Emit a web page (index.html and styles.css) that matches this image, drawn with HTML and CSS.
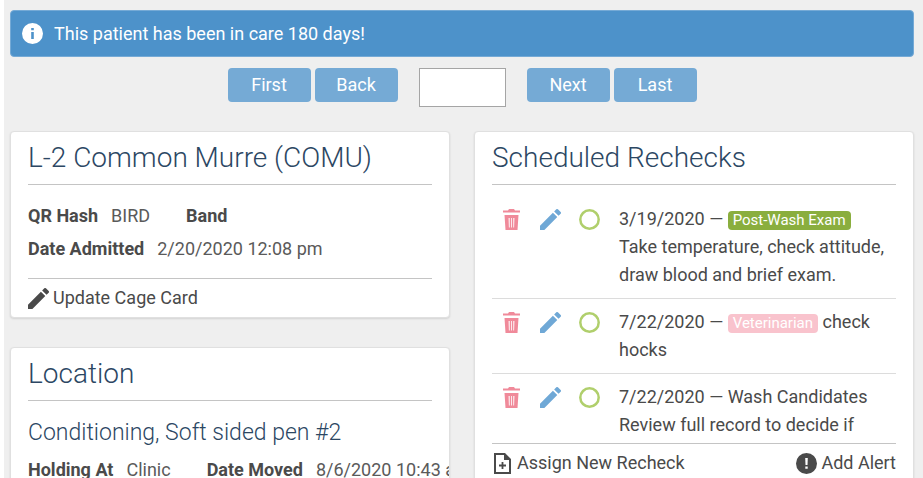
FILE: index.html
```
<!DOCTYPE html>
<html lang="en">

<head>
    <meta charset="UTF-8">
    <title>L-2 Common Murre (COMU)</title>
    <meta name="viewport" content="width=device-width, initial-scale=1.0">
    <link rel="stylesheet" href="styles.css">
</head>

<body>
    <svg class="sprite" aria-hidden="true">
        <symbol id="pencil" viewBox="3 3 18 18">
            <path d="M3 17.25V21h3.75L17.81 9.94l-3.75-3.75L3 17.25zM20.71 7.04a1 1 0 0 0 0-1.41l-2.34-2.34a1 1 0 0 0-1.41 0l-1.83 1.83 3.75 3.75 1.83-1.83z"/>
        </symbol>
        <symbol id="trash" viewBox="0 0 21 21">
            <path d="M2 1.500h5l1-1.500h5l1 1.500h5v2H2zM3.500 6h14l-1 15h-12zM7.600 9l.3 9.500h.8V9zM10.100 9v9.500h.8V9zM12.300 9v9.500h.8l.3-9.500z" fill-rule="evenodd"/>
        </symbol>
        <symbol id="circle" viewBox="0 0 21 21">
            <circle cx="10.500" cy="10.500" r="9.200" fill="none" stroke="currentColor" stroke-width="2.500"/>
        </symbol>
    </svg>
    <div class="page">
        <div class="notice" role="status">
            <svg class="icon" viewBox="0 0 21 21"><path fill-rule="evenodd" d="M10.500 0a10.500 10.500 0 1 0 0 21 10.500 10.500 0 0 0 0-21zM9.200 5h2.600v2.200H9.200zM9.200 9h2.600v7H9.200z"/></svg>
            <span>This patient has been in care 180 days!</span>
        </div>

        <form class="pager">
            <div class="pager-group">
                <button type="button" class="btn">First</button>
                <button type="button" class="btn">Back</button>
            </div>
            <input type="text" class="pager-input" aria-label="Case number">
            <div class="pager-group">
                <button type="button" class="btn">Next</button>
                <button type="button" class="btn">Last</button>
            </div>
        </form>

        <div class="columns">
            <div class="column">
                <section class="card">
                    <h2 class="card-title">L-2 Common Murre (COMU)</h2>
                    <dl class="facts">
                        <div class="facts-row">
                            <div class="fact"><dt>QR Hash</dt><dd>BIRD</dd></div>
                            <div class="fact"><dt>Band</dt><dd></dd></div>
                        </div>
                        <div class="facts-row">
                            <div class="fact"><dt>Date Admitted</dt><dd>2/20/2020 12:08 pm</dd></div>
                        </div>
                    </dl>
                    <div class="card-footer">
                        <a href="#" class="action"><svg class="icon"><use href="#pencil"/></svg>Update Cage Card</a>
                    </div>
                </section>

                <section class="card">
                    <h2 class="card-title">Location</h2>
                    <h3 class="card-subtitle">Conditioning, Soft sided pen #2</h3>
                    <dl class="facts facts-tight">
                        <div class="facts-row">
                            <div class="fact"><dt>Holding At</dt><dd>Clinic</dd></div>
                            <div class="fact"><dt>Date Moved</dt><dd>8/6/2020 10:43 am</dd></div>
                        </div>
                    </dl>
                </section>
            </div>

            <div class="column">
                <section class="card">
                    <h2 class="card-title">Scheduled Rechecks</h2>
                    <ul class="rechecks">
                        <li class="recheck">
                            <div class="recheck-tools">
                                <button type="button" class="tool trash" aria-label="Delete"><svg class="icon"><use href="#trash"/></svg></button>
                                <button type="button" class="tool edit" aria-label="Edit"><svg class="icon"><use href="#pencil"/></svg></button>
                                <button type="button" class="tool done" aria-label="Mark complete"><svg class="icon"><use href="#circle"/></svg></button>
                            </div>
                            <p>3/19/2020 — <span class="label green">Post-Wash Exam</span><br>Take temperature, check attitude, draw blood and brief exam.</p>
                        </li>
                        <li class="recheck">
                            <div class="recheck-tools">
                                <button type="button" class="tool trash" aria-label="Delete"><svg class="icon"><use href="#trash"/></svg></button>
                                <button type="button" class="tool edit" aria-label="Edit"><svg class="icon"><use href="#pencil"/></svg></button>
                                <button type="button" class="tool done" aria-label="Mark complete"><svg class="icon"><use href="#circle"/></svg></button>
                            </div>
                            <p>7/22/2020 — <span class="label pink">Veterinarian</span> check hocks</p>
                        </li>
                        <li class="recheck">
                            <div class="recheck-tools">
                                <button type="button" class="tool trash" aria-label="Delete"><svg class="icon"><use href="#trash"/></svg></button>
                                <button type="button" class="tool edit" aria-label="Edit"><svg class="icon"><use href="#pencil"/></svg></button>
                                <button type="button" class="tool done" aria-label="Mark complete"><svg class="icon"><use href="#circle"/></svg></button>
                            </div>
                            <p>7/22/2020 — Wash Candidates Review full record to decide if</p>
                        </li>
                    </ul>
                    <div class="card-footer">
                        <a href="#" class="action"><svg class="icon" viewBox="0 0 21 21"><path fill-rule="evenodd" d="M2 0h11l6 6v15H2zM4 2v17h13V7h-5V2z"/><path d="M9.600 9h1.800v2.600H14v1.800h-2.600V16H9.600v-2.600H7v-1.800h2.600z"/></svg>Assign New Recheck</a>
                        <a href="#" class="action"><svg class="icon" viewBox="0 0 21 21"><path fill-rule="evenodd" d="M10.500 0a10.500 10.500 0 1 0 0 21 10.500 10.500 0 0 0 0-21zM9.200 5h2.600l-.3 7H9.500zM9.300 13.500h2.400v2.200H9.300z"/></svg>Add Alert</a>
                    </div>
                </section>
            </div>
        </div>
    </div>
</body>

</html>
```
FILE: styles.css
```
* {
    box-sizing: border-box;
    margin: 0;
    padding: 0;
}

html {
    height: 100%;
    overflow: hidden;
}

body {
    height: 100%;
    overflow: hidden;
    background: #efefef;
    border-left: 4px solid #fff;
    color: #4a4a4a;
    font-family: Roboto, "Liberation Sans", sans-serif;
    font-size: 18px;
    line-height: 28px;
}

button,
input {
    font: inherit;
}

.sprite {
    display: none;
}

.icon {
    display: block;
    flex: none;
    width: 21px;
    height: 21px;
    fill: currentColor;
}

.page {
    padding: 10px 9px 0 6px;
}

.notice {
    display: flex;
    align-items: center;
    gap: 11px;
    height: 47px;
    padding: 0 11px;
    background: #4d92ca;
    border: 1px solid #75aad6;
    border-radius: 4px;
    color: #fff;
}

.pager {
    display: flex;
    justify-content: center;
    align-items: flex-start;
    gap: 21px;
    padding: 11px 0 24px;
}

.pager-group {
    display: flex;
    gap: 4px;
}

.btn {
    width: 83px;
    height: 34px;
    background: #75aad5;
    border: 0;
    border-radius: 4px;
    color: #fff;
}

.pager-input {
    width: 87px;
    height: 39px;
    padding: 0 8px;
    background: #fff;
    border: 1px solid #a5a5a5;
}

.columns {
    display: grid;
    grid-template-columns: minmax(0, 1fr) minmax(0, 1fr);
    align-items: start;
    gap: 24px;
}

.column {
    display: grid;
    gap: 29px;
}

.card {
    min-width: 0;
    padding: 0 17px;
    overflow: hidden;
    background: #fff;
    border: 1px solid #e0e0e0;
    border-radius: 4px;
    box-shadow: 0 1px 2px rgba(0, 0, 0, .12);
}

.card-title {
    padding: 8px 0;
    border-bottom: 1px solid #c4c4c4;
    color: #2c4763;
    font-size: 28px;
    font-weight: 300;
    line-height: 36px;
}

.card-subtitle {
    padding-top: 16px;
    color: #2c4763;
    font-size: 23px;
    font-weight: 300;
    line-height: 32px;
}

.facts {
    display: grid;
    gap: 5px;
    padding: 17px 0 15px;
}

.facts-tight {
    padding-top: 7px;
}

.facts-row {
    display: flex;
    gap: 36px;
    white-space: nowrap;
}

.fact {
    display: flex;
    gap: 13px;
}

.fact dt {
    font-weight: 700;
}

.fact dd {
    color: #5a5a5a;
}

.card-footer {
    display: flex;
    justify-content: space-between;
    padding: 5px 0;
    border-top: 1px solid #c4c4c4;
}

.action {
    display: flex;
    align-items: center;
    gap: 4px;
    color: #4a4a4a;
    text-decoration: none;
}

.rechecks {
    max-height: 258px;
    padding-top: 11px;
    overflow: hidden;
    list-style: none;
}

.recheck {
    display: grid;
    grid-template-columns: 127px 1fr;
    padding: 9px 0;
}

.recheck + .recheck {
    border-top: 1px solid #dcdcdc;
}

.recheck-tools {
    display: flex;
    align-items: flex-start;
    gap: 18px;
    padding: 4px 0 0 9px;
}

.tool {
    background: none;
    border: 0;
    cursor: pointer;
}

.trash {
    color: #f08a9a;
}

.edit {
    color: #6fa8d6;
}

.done {
    color: #b0cf6c;
}

.label {
    display: inline-block;
    padding: 0 5px;
    border-radius: 4px;
    color: #fff;
    font-size: 15px;
    line-height: 19px;
}

.green {
    background: #8aae3e;
}

.pink {
    background: #f9c3cd;
}
```
